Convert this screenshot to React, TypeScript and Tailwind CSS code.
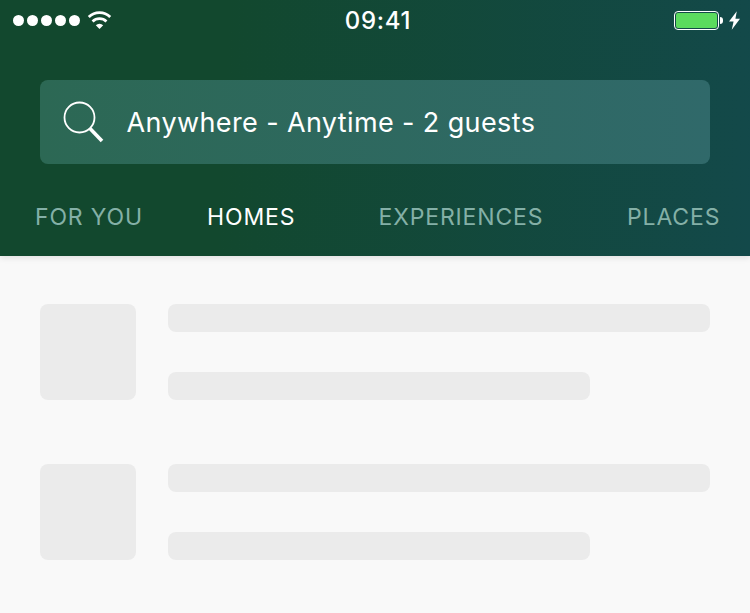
import React from "react";

function WifiIcon() {
  return (
    <svg width="25" height="19" viewBox="0 0 26 20" fill="none" stroke="#fff" strokeWidth="2.9">
      <path d="M1.7 6.4a16 16 0 0 1 22.6 0" />
      <path d="M5.7 11.1a10.4 10.4 0 0 1 14.6 0" />
      <path d="M9.1 14.9a5.6 5.6 0 0 1 7.8 0L13 19z" fill="#fff" stroke="none" />
    </svg>
  );
}

function SearchIcon() {
  return (
    <svg width="42" height="42" viewBox="0 0 42 42" fill="none" stroke="#fff">
      <circle cx="16.5" cy="16.5" r="15" strokeWidth="1.8" />
      <path d="M27 27.5l12 12.5" strokeWidth="3.6" />
    </svg>
  );
}

function StatusBar() {
  return (
    <div className="grid h-10 grid-cols-3 items-center">
      <div className="flex items-center pl-[13px]">
        <div className="flex gap-[3px]">
          {[0, 1, 2, 3, 4].map((i) => (
            <span key={i} className="size-[11px] rounded-full bg-white" />
          ))}
        </div>
        <span className="ml-[7px]">
          <WifiIcon />
        </span>
      </div>
      <div className="pt-px pl-[6px] text-center text-[24px] leading-10 font-medium tracking-[0.7px]">09:41</div>
      <div className="flex items-center justify-end pr-[10px]">
        <div className="h-[19px] w-[45px] rounded-[4px] border border-white p-px">
          <div className="h-full rounded-[2px] bg-[#5bdb5e]" />
        </div>
        <div className="ml-px h-[7px] w-[3px] rounded-r-full bg-white" />
        <svg className="ml-[6px]" width="11" height="19" viewBox="0 0 12 20" fill="#fff">
          <path d="M8.5 0L0 11h5L3 20l9-12H7z" />
        </svg>
      </div>
    </div>
  );
}

function SkeletonRow() {
  return (
    <div className="flex gap-8">
      <div className="size-24 rounded-lg bg-[#ebebeb]" />
      <div className="flex flex-1 flex-col justify-between">
        <div className="h-7 rounded-lg bg-[#ebebeb]" />
        <div className="h-7 w-[422px] rounded-lg bg-[#ebebeb]" />
      </div>
    </div>
  );
}

export default function App() {
  return (
    <div className="h-[613px] w-[750px] overflow-hidden bg-[#f9f9f9] font-['Inter',sans-serif] text-white">
      <header className="h-64 bg-linear-[93deg,#12482e_0%,#12482e_30%,#13494a_100%] shadow-[0_2px_6px_rgba(0,0,0,0.1)]">
        <StatusBar />
        <div className="mx-10 mt-10 flex h-[84px] items-center rounded-lg bg-linear-to-r from-[#2c6854] to-[#30696a] pl-[23px]">
          <SearchIcon />
          <span className="ml-[21.5px] pt-[3px] text-[27px] tracking-[0.38px]">Anywhere - Anytime - 2 guests</span>
        </div>
        <nav className="mt-[35px] grid grid-cols-[172px_171.5px_248.5px_auto] pl-[35px] text-[23px] leading-9 tracking-[0.85px] text-[#84b0a7]">
          <span>FOR YOU</span>
          <span className="text-white">HOMES</span>
          <span>EXPERIENCES</span>
          <span>PLACES</span>
        </nav>
      </header>
      <main className="flex flex-col gap-16 px-10 pt-12">
        <SkeletonRow />
        <SkeletonRow />
      </main>
    </div>
  );
}
